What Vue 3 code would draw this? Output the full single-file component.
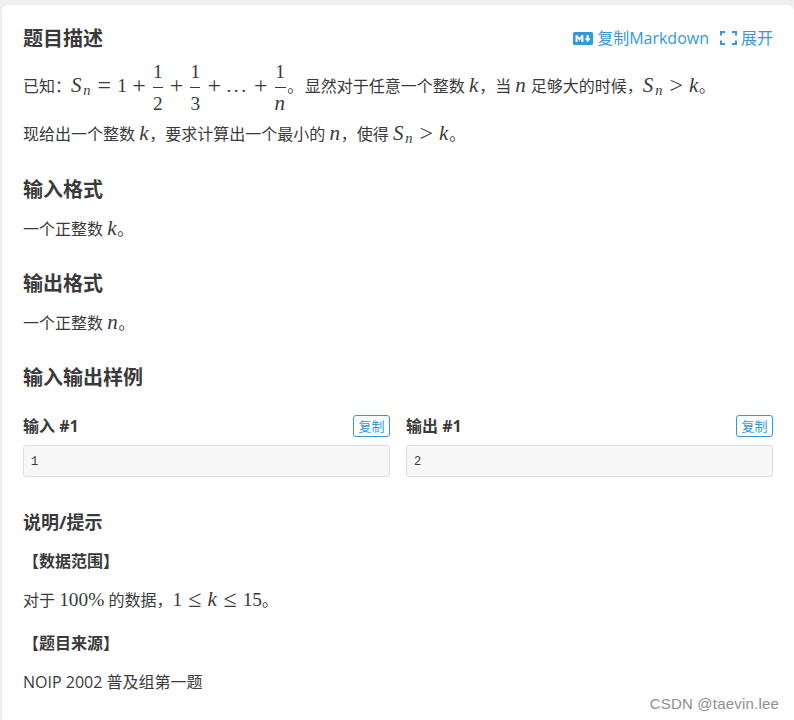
<script setup>
const samples = [
  { label: '输入 #1', value: '1' },
  { label: '输出 #1', value: '2' },
]
</script>

<template>
  <main class="page">
    <article class="card">
      <header class="title-row">
        <h2>题目描述</h2>
        <div class="actions">
          <a class="action">
            <svg class="md-icon" viewBox="0 0 20 13" aria-hidden="true">
              <rect width="20" height="13" rx="1.6" fill="#3498db" />
              <path d="M2.6 10V3.200h2l1.900 2.700 1.900-2.700h2V10H8.500V6.200L6.500 8.900 4.500 6.200V10Z" fill="#fff" />
              <path d="M13.500 3.200h2.300v3.400h1.900l-3.050 3.500-3.050-3.500h1.900Z" fill="#fff" />
            </svg>
            复制Markdown
          </a>
          <a class="action">
            <svg class="expand-icon" viewBox="0 0 17 14" aria-hidden="true">
              <path d="M5 1H1v3.500M12 1H16v3.500M5 13H1V9.500M12 13H16V9.500" fill="none" stroke="#3498db" stroke-width="2" />
            </svg>
            展开
          </a>
        </div>
      </header>

      <p class="formula-line">已知：<span class="math first"><i>S</i><sub><i>n</i></sub><b class="rel">=</b>1<b class="bin">+</b><span class="frac"><span>1</span><span class="den">2</span></span><b class="bin">+</b><span class="frac"><span>1</span><span class="den">3</span></span><b class="bin">+</b><span class="dots">...</span><b class="bin">+</b><span class="frac"><span>1</span><span class="den"><i>n</i></span></span></span><span class="after-frac">。</span>显然对于任意一个整数 <i class="math">k</i>，当 <i class="math">n</i> 足够大的时候，<span class="math"><i>S</i><sub><i>n</i></sub><b class="rel">&gt;</b><i>k</i></span>。</p>
      <p class="line-two">现给出一个整数 <i class="math">k</i>，要求计算出一个最小的 <i class="math">n</i>，使得 <span class="math"><i>S</i><sub><i>n</i></sub><b class="rel">&gt;</b><i>k</i></span>。</p>

      <h2 class="section after-line">输入格式</h2>
      <p class="body">一个正整数 <i class="math">k</i>。</p>

      <h2 class="section">输出格式</h2>
      <p class="body">一个正整数 <i class="math">n</i>。</p>

      <h2 class="section">输入输出样例</h2>
      <div class="samples">
        <section v-for="sample in samples" :key="sample.label" class="sample">
          <div class="sample-head">
            <h3>{{ sample.label }}</h3>
            <button type="button">复制</button>
          </div>
          <pre>{{ sample.value }}</pre>
        </section>
      </div>

      <h2 class="hint-title">说明/提示</h2>
      <p class="strong first-strong"><strong>【数据范围】</strong></p>
      <p class="range">对于 <span class="math">100%</span> 的数据，<span class="math">1<b class="rel">≤</b><i>k</i><b class="rel">≤</b>15</span>。</p>
      <p class="strong"><strong>【题目来源】</strong></p>
      <p class="source">NOIP 2002 普及组第一题</p>
    </article>
    <div class="watermark">CSDN @taevin.lee</div>
  </main>
</template>

<style>
html, body { margin: 0; background: #efefef; }
</style>

<style scoped>
.page {
  position: relative;
  width: 794px;
  height: 720px;
  overflow: hidden;
  padding: 5px 0 0 2px;
  box-sizing: border-box;
  font-family: "Open Sans", "Noto Sans CJK SC", sans-serif;
  font-size: 16px;
  color: #3a3a3a;
}
.card {
  height: 715px;
  box-sizing: border-box;
  padding: 19px 21px 0;
  background: #fff;
  border-radius: 6px 6px 0 0;
}
p, h2, h3, pre { margin: 0; }
h2 {
  font-size: 20px;
  line-height: 30px;
  font-weight: 700;
  color: #3a3a3a;
}
.title-row {
  display: flex;
  justify-content: space-between;
  align-items: center;
  height: 30px;
}
.actions {
  display: flex;
  gap: 11px;
  margin-top: -2px;
}
.action {
  display: flex;
  align-items: center;
  gap: 4px;
  color: #3498db;
  line-height: 30px;
}
.md-icon { width: 20px; height: 13px; }
.expand-icon { width: 17px; height: 14px; }
.formula-line {
  height: 50px;
  line-height: 50px;
  margin-top: 7px;
  white-space: nowrap;
}
.line-two {
  height: 26px;
  line-height: 26px;
  margin-top: 10px;
  white-space: nowrap;
}
.math {
  font-family: "Liberation Serif", "DejaVu Serif", serif;
  font-size: 19.36px;
  line-height: 0;
}
.math i, i.math { font-size: 21px; letter-spacing: 0.8px; }
.math sub i { font-size: 14.500px; letter-spacing: 0; }
.math b {
  font-weight: 400;
  font-size: 24px;
  line-height: 0;
  vertical-align: -1px;
}
.math sub {
  font-size: 13.5px;
  line-height: 0;
  vertical-align: -3px;
  margin: 0 1px 0 1px;
}
.rel { margin: 0 6px; }
.bin { margin: 0 5.500px; }
.dots { letter-spacing: 2.500px; }
.frac {
  display: inline-flex;
  flex-direction: column;
  align-items: center;
  vertical-align: middle;
  min-width: 10px;
  line-height: 17px;
  margin: 0 1.500px;
}
.frac > span { padding: 0 0 7px; }
.frac .den {
  align-self: stretch;
  text-align: center;
  border-top: 1px solid #3a3a3a;
  padding: 7px 0 0;
}
.after-frac { margin-right: 1.500px; }
.section { margin-top: 27px; }
.section.after-line { margin-top: 28px; }
.body {
  height: 26px;
  line-height: 26px;
  margin-top: 11px;
  white-space: nowrap;
}
.samples {
  display: grid;
  grid-template-columns: 1fr 1fr;
  gap: 16px;
  margin-top: 22px;
}
.sample-head {
  display: flex;
  justify-content: space-between;
  align-items: center;
  height: 22px;
  margin-bottom: 8px;
}
h3 { font-size: 16px; line-height: 22px; font-weight: 700; }
button {
  width: 37px;
  height: 22px;
  padding: 0;
  box-sizing: border-box;
  border: 1px solid #3498db;
  border-radius: 3px;
  background: #fff;
  color: #3498db;
  font: 13px/18px "Noto Sans CJK SC", sans-serif;
}
pre {
  height: 32px;
  box-sizing: border-box;
  padding: 0 7px;
  border: 1px solid #ddd;
  border-radius: 3px;
  background: #f7f7f7;
  font: 12px/32px "Liberation Mono", monospace;
}
.hint-title {
  font-size: 18px;
  line-height: 26px;
  margin-top: 32px;
}
.strong { line-height: 26px; height: 26px; margin-top: 13px; }
.strong strong { font-weight: 700; }
.range {
  height: 26px;
  line-height: 26px;
  margin-top: 13px;
  white-space: nowrap;
}
.range + .strong { margin-top: 17px; }
.source { line-height: 26px; margin-top: 13px; }
.watermark {
  position: absolute;
  right: 15px;
  top: 695px;
  font-family: "Liberation Sans", sans-serif;
  font-size: 15px;
  letter-spacing: 0.2px;
  line-height: 18px;
  color: #8e8e8e;
}
</style>
